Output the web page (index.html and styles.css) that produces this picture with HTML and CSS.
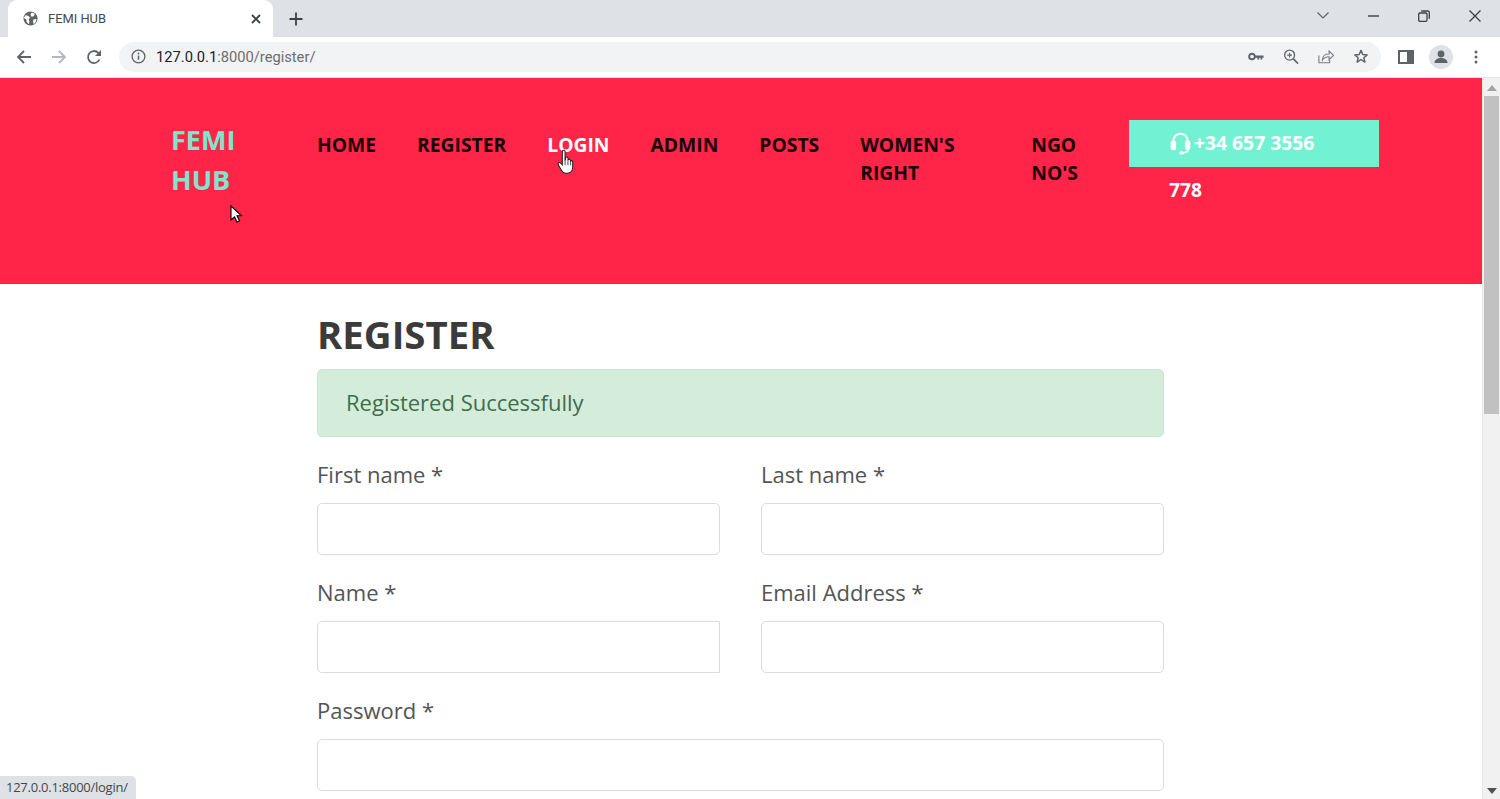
FILE: index.html
```html
<!DOCTYPE html>
<html lang="en">
<head>
<meta charset="utf-8">
<title>FEMI HUB</title>
<link rel="stylesheet" href="styles.css">
</head>
<body>
<div class="browser">
  <div class="tabstrip">
    <div class="tab">
      <svg class="favicon" viewBox="0 0 16 16"><circle cx="8" cy="8" r="7.500" fill="#5f6368"/><path d="M2.500 4.500l3 .5 2 2-1.500 2 1 2.500-1 2.500-2.200-2.500-.3-2.500L1 7.500zM9.500 1.500l3 1.500-1 2.500-2.500.5-1-2.500zM11 9l3.500-.5-1 3.500-2 2-.8-2.500z" fill="#fff"/></svg>
      <span class="tab-title">FEMI HUB</span>
      <svg class="tab-close" viewBox="0 0 10 10"><path d="M1 1l8 8M9 1l-8 8" stroke="#3c4043" stroke-width="1.800" fill="none"/></svg>
    </div>
    <svg class="new-tab" viewBox="0 0 14 14"><path d="M7 .5v13M.5 7h13" stroke="#3c4043" stroke-width="1.800" fill="none"/></svg>
    <div class="win-controls">
      <svg class="win-chevron" viewBox="0 0 12 7"><path d="M.5.5L6 6l5.500-5.500" stroke="#5f6368" stroke-width="1.200" fill="none"/></svg>
      <svg class="win-min" viewBox="0 0 11 2"><path d="M0 1h11" stroke="#3c4043" stroke-width="1.400"/></svg>
      <svg class="win-restore" viewBox="0 0 12 12"><rect x=".7" y="3" width="8.300" height="8.300" rx="1.200" stroke="#3c4043" stroke-width="1.300" fill="none"/><path d="M3.200 1h6.600a1.500 1.500 0 0 1 1.500 1.500v6.300" stroke="#3c4043" stroke-width="1.300" fill="none"/></svg>
      <svg class="win-close" viewBox="0 0 12 12"><path d="M.5.5l11 11M11.500.5l-11 11" stroke="#3c4043" stroke-width="1.300" fill="none"/></svg>
    </div>
  </div>
  <div class="toolbar">
    <svg class="tool-btn" viewBox="0 0 16 16"><path d="M15 8H2M8 2L2 8l6 6" stroke="#5f6368" stroke-width="1.800" fill="none"/></svg>
    <svg class="tool-btn" viewBox="0 0 16 16"><path d="M1 8h13M8 2l6 6-6 6" stroke="#b4b7bb" stroke-width="1.800" fill="none"/></svg>
    <svg class="tool-btn" viewBox="0 0 16 16"><path d="M13.500 10.500A6 6 0 1 1 12.300 3.800L14.500 6" stroke="#5f6368" stroke-width="1.800" fill="none"/><path d="M15 1v6H9z" fill="#5f6368"/></svg>
    <div class="omnibox">
      <svg class="info" viewBox="0 0 16 16"><circle cx="8" cy="8" r="6.800" stroke="#5f6368" stroke-width="1.400" fill="none"/><path d="M8 7v4.500" stroke="#5f6368" stroke-width="1.600"/><circle cx="8" cy="4.800" r="1" fill="#5f6368"/></svg>
      <span class="url"><span class="url-host">127.0.0.1</span>:8000/register/</span>
      <span class="omni-spacer"></span>
      <svg class="omni-icon" viewBox="0 0 18 10"><circle cx="4.500" cy="5" r="3.200" stroke="#5f6368" stroke-width="2.200" fill="none"/><path d="M8 4h9.500v2.500H16V8.500h-2V6.500h-1.500V8.500h-2V6.500H8z" fill="#5f6368"/></svg>
      <svg class="omni-icon" viewBox="0 0 16 16"><circle cx="6.500" cy="6.500" r="5.300" stroke="#5f6368" stroke-width="1.400" fill="none"/><path d="M10.500 10.500l5 5" stroke="#5f6368" stroke-width="1.800"/><path d="M6.500 4v5M4 6.500h5" stroke="#5f6368" stroke-width="1.200"/></svg>
      <svg class="omni-icon" viewBox="0 0 18 16"><path d="M1 7v8h12v-3" stroke="#7c7f84" stroke-width="1.300" fill="none"/><path d="M5 12c0-5 3.500-6.800 7.500-6.800V2l5 4.800-5 4.700V8.300C9 8.300 6.500 9.500 5 12z" stroke="#7c7f84" stroke-width="1.300" fill="none"/></svg>
      <svg class="omni-icon" viewBox="0 0 16 16"><path d="M8 1.500l1.900 4.300 4.700.5-3.500 3.100 1 4.600L8 11.200l-4.100 2.800 1-4.600L1.400 6.300l4.700-.5z" stroke="#5f6368" stroke-width="1.600" fill="none" stroke-linejoin="round"/></svg>
    </div>
    <svg class="side-panel" viewBox="0 0 16 14"><rect x="1" y="1" width="14" height="12" stroke="#5f6368" stroke-width="2" fill="none"/><rect x="9" y="1" width="6" height="12" fill="#5f6368"/></svg>
    <div class="avatar"><svg viewBox="0 0 16 16"><circle cx="8" cy="5" r="3.400" fill="#5f6368"/><path d="M1.500 14c0-3.500 3-5 6.500-5s6.500 1.500 6.500 5z" fill="#5f6368"/></svg></div>
    <svg class="kebab" viewBox="0 0 4 14"><circle cx="2" cy="2" r="1.500" fill="#5f6368"/><circle cx="2" cy="7" r="1.500" fill="#5f6368"/><circle cx="2" cy="12" r="1.500" fill="#5f6368"/></svg>
  </div>
  <div class="viewport">
    <main class="page">
      <header class="site-header">
        <a class="logo">FEMI HUB</a>
        <nav class="nav">
          <a class="nav-link">HOME</a>
          <a class="nav-link">REGISTER</a>
          <a class="nav-link nav-link-hover">LOGIN</a>
          <a class="nav-link">ADMIN</a>
          <a class="nav-link">POSTS</a>
          <a class="nav-link nav-wide">WOMEN'S RIGHT</a>
          <a class="nav-link nav-ngo">NGO NO'S</a>
        </nav>
        <div class="phone">
          <div class="phone-inner"><svg class="headset" viewBox="0 0 20 22"><path d="M3.500 11V9a6.500 6.500 0 0 1 13 0v2" stroke="#fff" stroke-width="1.800" fill="none"/><rect x="1" y="8.500" width="5" height="9" rx="2.400" fill="#fff"/><rect x="14" y="8.500" width="5" height="9" rx="2.400" fill="#fff"/><path d="M17 17c0 2.500-2.500 3-5.500 3" stroke="#fff" stroke-width="1.500" fill="none"/><rect x="9" y="18.500" width="4" height="3" rx="1.500" fill="#fff"/></svg><span>+34 657 3556 778</span></div>
        </div>
      </header>
      <section class="register">
        <h1 class="title">REGISTER</h1>
        <div class="alert">Registered Successfully</div>
        <form class="form-grid">
          <div class="field">
            <label class="label">First name *</label>
            <input class="input" type="text">
          </div>
          <div class="field">
            <label class="label">Last name *</label>
            <input class="input" type="text">
          </div>
          <div class="field">
            <label class="label">Name *</label>
            <input class="input input-cut" type="text">
          </div>
          <div class="field">
            <label class="label">Email Address *</label>
            <input class="input" type="text">
          </div>
          <div class="field field-full">
            <label class="label">Password *</label>
            <input class="input" type="password">
          </div>
        </form>
      </section>
    </main>
    <div class="scrollbar">
      <svg class="scroll-arrow" viewBox="0 0 10 6"><path d="M5 0l5 6H0z" fill="#a3a3a3"/></svg>
      <div class="scroll-thumb"></div>
      <span class="scroll-space"></span>
      <svg class="scroll-arrow" viewBox="0 0 10 6"><path d="M5 6L0 0h10z" fill="#505050"/></svg>
    </div>
  </div>
</div>
<div class="status-bubble">127.0.0.1:8000/login/</div>
<svg class="cursor-arrow" viewBox="0 0 12 18"><path d="M1 1v14l3.500-3.200L7 17l2.500-1.200-2.500-5h4.500z" fill="#fff" stroke="#000" stroke-width="1.100"/></svg>
<svg class="cursor-hand" viewBox="0 0 16 24"><path d="M5 2.200a1.300 1.300 0 0 1 2.600 0V10l.4-.2V8.500a1.200 1.200 0 0 1 2.400 0v1.700a1.200 1.200 0 0 1 2.300.3v1a1.100 1.100 0 0 1 2.100.5v4.500c0 3.500-2 6-5 6H8c-2 0-3-1-4-3L1.200 14.500c-.8-1.500 1-2.800 2.200-1.500L5 14.500z" fill="#fff" stroke="#222" stroke-width="1"/><path d="M7.600 10v5M10.300 10v5M12.800 11v4" stroke="#333" stroke-width=".8"/></svg>
</body>
</html>
```

FILE: styles.css
```css
* { box-sizing: border-box; }
html, body { margin: 0; padding: 0; height: 799px; overflow: hidden; background: #fff; }
body { font-family: "Open Sans", "Liberation Sans", sans-serif; position: relative; }
.browser { display: flex; flex-direction: column; height: 799px; }

.tabstrip { height: 37px; background: #dee1e6; display: flex; align-items: flex-end; padding-left: 8px; flex: none; }
.tab { width: 265px; height: 37px; margin-top: 0; background: #fff; border-radius: 9px 9px 0 0; display: flex; align-items: center; padding: 0 12px 0 15px; }
.favicon { width: 15px; height: 15px; flex: none; }
.tab-title { margin-left: 10px; font-size: 12.900px; color: #45484c; font-family: "Roboto", "Liberation Sans", sans-serif; flex: 1; }
.tab-close { width: 10px; height: 10px; flex: none; }
.new-tab { width: 14px; height: 14px; margin: 0 0 11px 16px; flex: none; }
.win-controls { margin-left: auto; height: 37px; display: flex; align-items: center; padding: 0 19px 6px 0; }
.win-chevron { width: 12px; height: 7px; margin-right: 39px; }
.win-min { width: 11px; height: 2px; margin-right: 39px; }
.win-restore { width: 12px; height: 12px; margin-right: 39px; }
.win-close { width: 12px; height: 12px; }

.toolbar { height: 41px; background: #fff; display: flex; align-items: center; padding: 0 0 1px 16px; flex: none; border-bottom: 1px solid #e3e4e6; }
.tool-btn { width: 16px; height: 16px; margin-right: 19px; flex: none; }
.omnibox { width: 1262px; height: 30px; margin-left: -2px; border-radius: 15px; background: #f1f3f4; display: flex; align-items: center; padding: 0 12px 0 12px; flex: none; }
.info { width: 15px; height: 15px; flex: none; }
.url { margin-left: 10px; font-size: 14.700px; color: #6b6e72; font-family: "Roboto", "Liberation Sans", sans-serif; }
.url-host { color: #202124; }
.omni-spacer { flex: 1; }
.omni-icon { width: 16px; height: 15px; margin-left: 19px; flex: none; }
.side-panel { width: 16px; height: 14px; margin-left: 17px; flex: none; }
.avatar { width: 24px; height: 24px; margin-left: 15px; border-radius: 50%; background: #dee1e6; display: flex; align-items: center; justify-content: center; flex: none; }
.avatar svg { width: 16px; height: 16px; }
.kebab { width: 4px; height: 14px; margin-left: 21px; flex: none; }

.viewport { flex: 1; display: flex; min-height: 0; }
.page { flex: 1; min-width: 0; overflow: hidden; }
.scrollbar { width: 18px; background: #f1f1f1; display: flex; flex-direction: column; align-items: center; flex: none; border-left: 1px solid #e8e8e8; }
.scroll-arrow { width: 10px; height: 6px; margin: 7px 0 5px; flex: none; }
.scroll-thumb { width: 15px; height: 318px; background: #c1c1c1; flex: none; }
.scroll-space { flex: 1; }

.site-header { height: 206px; background: #ff2549; display: grid; grid-template-columns: 146px 812px 250px; padding: 42px 0 0 171px; align-items: start; }
.logo { font-size: 27px; font-weight: 700; line-height: 40px; color: #7fe5cb; width: 80px; }
.nav { display: flex; align-items: flex-start; padding-top: 11px; }
.nav-link { font-size: 19.300px; font-weight: 700; line-height: 28px; color: #1a0209; margin-right: 41px; white-space: nowrap; }
.nav-link-hover { color: #fff; }
.nav-wide { width: 130px; white-space: normal; }
.nav-ngo { width: 60px; margin-right: 0; white-space: normal; }
.phone { width: 250px; height: 47px; background: #72f2d2; padding: 0 60px 0 40px; color: #fff; font-size: 19.300px; font-weight: 700; line-height: 47px; }
.phone-inner { margin-top: -1px; }
.headset { width: 23px; height: 24px; vertical-align: -5px; margin-right: 2px; }

.register { width: 847px; margin-left: 317px; }
.title { margin: 26px 0 0; font-size: 38.400px; font-weight: 700; line-height: 49px; color: #3b3b3b; }
.alert { height: 68px; margin-top: 10px; background: #d4edda; border: 1px solid #c9e6d0; border-radius: 5px; color: #3e6e4c; font-size: 22px; line-height: 65px; padding-left: 28px; }
.form-grid { display: grid; grid-template-columns: 403px 403px; column-gap: 41px; row-gap: 20px; margin-top: 20px; }
.field { display: flex; flex-direction: column; }
.field-full { grid-column: 1 / -1; }
.label { font-size: 22px; line-height: 34px; color: #545454; margin-bottom: 12px; }
.input { display: block; width: 100%; height: 52px; border: 1px solid #dcdcdc; border-radius: 5px; background: #fff; padding: 0 12px; }
.input-cut { border-radius: 5px 0 0 5px; }

.status-bubble { position: absolute; left: 0; bottom: 0; height: 23px; width: 136px; background: #dee1e6; border-top-right-radius: 5px; font-size: 13px; line-height: 23px; padding-left: 6px; color: #44474b; font-family: "Open Sans", sans-serif; letter-spacing: -0.25px; white-space: nowrap; }
.cursor-arrow { position: absolute; left: 230px; top: 205px; width: 12px; height: 18px; }
.cursor-hand { position: absolute; left: 557px; top: 149px; width: 17px; height: 26px; }
```
